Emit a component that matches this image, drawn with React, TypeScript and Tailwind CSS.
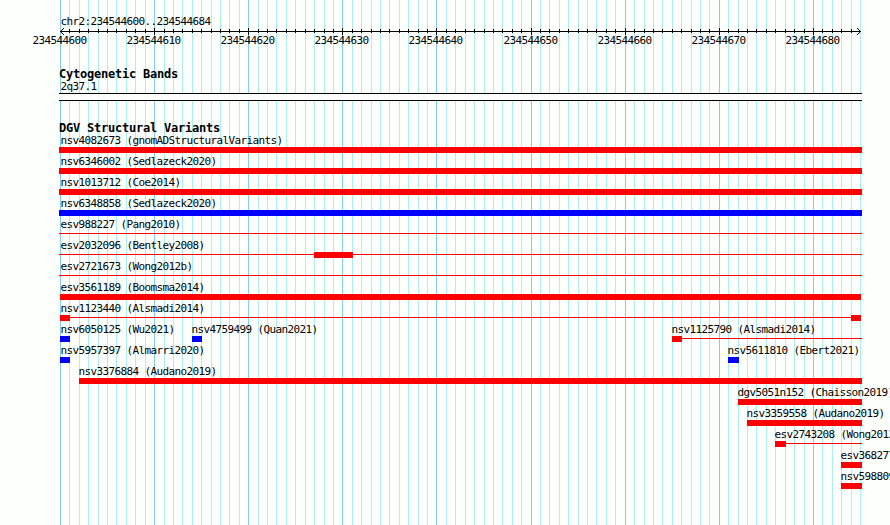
const LEFT = 60;
const PX_PER_BASE = 800 / 85;

type Kind = "block" | "line";

interface Segment {
  kind: Kind;
  width: number;
}

interface Feature {
  label: string;
  start: number;
  labelX?: number;
  color?: "red" | "blue";
  segments: Segment[];
}

const block = (width: number): Segment => ({ kind: "block", width });
const line = (width: number): Segment => ({ kind: "line", width });

const ROWS: Feature[][] = [
  [{ label: "nsv4082673 (gnomADStructuralVariants)", start: 59, labelX: 60.5, segments: [block(803)] }],
  [{ label: "nsv6346002 (Sedlazeck2020)", start: 59, labelX: 60.5, segments: [block(803)] }],
  [{ label: "nsv1013712 (Coe2014)", start: 59, labelX: 60.5, segments: [block(803)] }],
  [{ label: "nsv6348858 (Sedlazeck2020)", start: 59, labelX: 60.5, color: "blue", segments: [block(803)] }],
  [{ label: "esv988227 (Pang2010)", start: 59, labelX: 60.5, segments: [line(803)] }],
  [{ label: "esv2032096 (Bentley2008)", start: 59, labelX: 60.5, segments: [line(255), block(39), line(509)] }],
  [{ label: "esv2721673 (Wong2012b)", start: 59, labelX: 60.5, segments: [line(803)] }],
  [{ label: "esv3561189 (Boomsma2014)", start: 60, labelX: 60.5, segments: [block(801)] }],
  [{ label: "nsv1123440 (Alsmadi2014)", start: 60, labelX: 60.5, segments: [block(10), line(781), block(10)] }],
  [
    { label: "nsv6050125 (Wu2021)", start: 60, labelX: 60.5, color: "blue", segments: [block(10)] },
    { label: "nsv4759499 (Quan2021)", start: 192, color: "blue", segments: [block(10)] },
    { label: "nsv1125790 (Alsmadi2014)", start: 672, segments: [block(10), line(180)] },
  ],
  [
    { label: "nsv5957397 (Almarri2020)", start: 60, labelX: 60.5, color: "blue", segments: [block(10)] },
    { label: "nsv5611810 (Ebert2021)", start: 728, color: "blue", segments: [block(11)] },
  ],
  [{ label: "nsv3376884 (Audano2019)", start: 79, segments: [block(783)] }],
  [{ label: "dgv5051n152 (Chaisson2019)", start: 738, segments: [block(124)] }],
  [{ label: "nsv3359558 (Audano2019)", start: 747, segments: [block(115)] }],
  [{ label: "esv2743208 (Wong2012b)", start: 775, segments: [block(11), line(76)] }],
  [{ label: "esv368277", start: 841, segments: [block(21)] }],
  [{ label: "nsv598809", start: 841, segments: [block(21)] }],
];

const TICKS = Array.from({ length: 86 }, (_, i) => ({
  x: Math.round(LEFT + i * PX_PER_BASE),
  major: i % 10 === 0,
}));

function GridLines() {
  return (
    <svg className="absolute inset-0" width="890" height="525" shapeRendering="crispEdges">
      {TICKS.map(({ x, major }) => (
        <rect key={x} x={x} y={0} width={1} height={525} fill={major ? "#87ceeb" : "#afeeee"} />
      ))}
    </svg>
  );
}

function Ruler() {
  return (
    <svg className="block" width="890" height="7" shapeRendering="crispEdges">
      <rect x={60} y={3} width={801} height={1} />
      {TICKS.slice(1, -1).map(({ x, major }) => (
        <rect key={x} x={x} y={major ? 0 : 1} width={1} height={major ? 7 : 4} />
      ))}
      <path d="M61 2h1v1h-1zM62 1h1v1h-1zM63 0h1v1h-1zM61 4h1v1h-1zM62 5h1v1h-1zM63 6h1v1h-1z" />
      <path d="M859 2h1v1h-1zM858 1h1v1h-1zM857 0h1v1h-1zM859 4h1v1h-1zM858 5h1v1h-1zM857 6h1v1h-1z" />
    </svg>
  );
}

function TrackTitle({ children }: { children: string }) {
  return (
    <h2 className="ml-[59px] h-[14px] text-[12px] leading-[14px] font-bold tracking-[-0.225px]">{children}</h2>
  );
}

function FeatureGlyph({ feature }: { feature: Feature }) {
  const { label, start, labelX = start - 0.5, color = "red", segments } = feature;
  const fill = color === "red" ? "bg-[#ff0000]" : "bg-[#0000ff]";
  return (
    <div className="col-start-1 row-start-1">
      <p className="h-3" style={{ marginLeft: labelX }}>{label}</p>
      <div className="flex h-1.5" style={{ marginLeft: start }}>
        {segments.map((s, i) => (
          <div
            key={i}
            className={`shrink-0 ${s.kind === "block" ? "h-1.5" : "mt-0.5 h-px"} ${fill}`}
            style={{ width: s.width }}
          />
        ))}
      </div>
    </div>
  );
}

export default function App() {
  return (
    <main className="relative h-[525px] w-[890px] overflow-hidden bg-[#fdfffc] font-['DejaVu_Sans_Mono',monospace] text-[11px] leading-[12px] tracking-[-0.622px] whitespace-pre text-black">
      <GridLines />
      <div className="relative pt-4">
        <p className="ml-[60.5px] h-3">chr2:234544600..234544684</p>
        <Ruler />
        <div className="grid h-3">
          {TICKS.filter((t) => t.major).map(({ x }, i) => (
            <span key={x} className="col-start-1 row-start-1" style={{ marginLeft: x - 27.4 }}>
              {234544600 + i * 10}
            </span>
          ))}
        </div>

        <section className="mt-5">
          <TrackTitle>Cytogenetic Bands</TrackTitle>
          <p className="ml-[60.5px] h-3">2q37.1</p>
          <div className="ml-[59px] h-2 w-[803px] border-y border-black bg-[#fdfffc]" />
        </section>

        <section className="mt-5">
          <TrackTitle>DGV Structural Variants</TrackTitle>
          {ROWS.map((row, i) => (
            <div key={i} className="grid h-[21px] grid-cols-[890px]">
              {row.map((feature) => (
                <FeatureGlyph key={feature.label} feature={feature} />
              ))}
            </div>
          ))}
        </section>
      </div>
    </main>
  );
}
